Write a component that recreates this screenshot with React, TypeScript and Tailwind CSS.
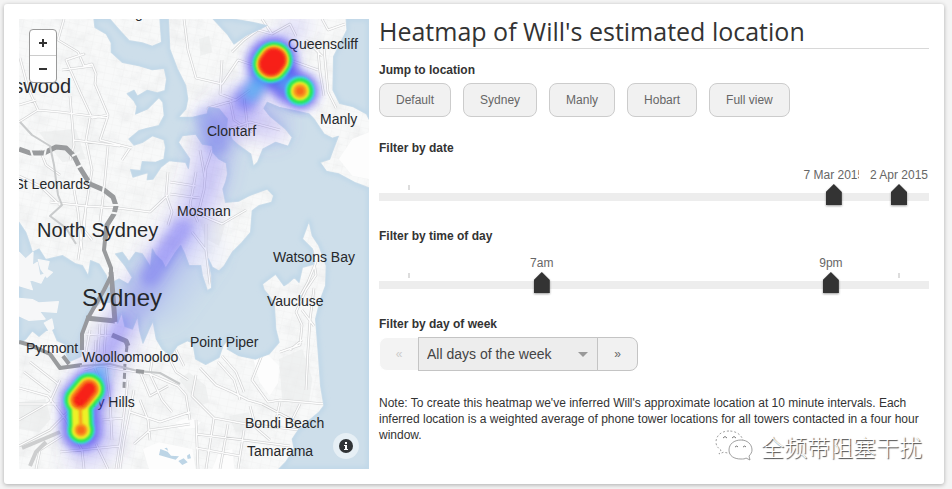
import { useId, useState } from "react";

const WATER = "#cddeea";
const DEEP = "#bfd7e8";

// Coastlines are plotted on a 1050 x 1350 sheet, the streets on the map's own grid.
const coast = [
  // Middle Harbour, Port Jackson and the Tasman Sea
  "M225 0 228 25 262 45 277 72 277 100 310 130 360 140 400 152 436 148 443 180 438 215 415 222 385 214 355 232 345 214 325 224 345 245 354 262 350 285 385 270 420 235 432 250 436 290 420 320 385 328 360 335 330 360 345 378 370 370 400 350 435 362 440 385 435 420 410 430 370 428 365 455 335 452 342 474 388 460 385 482 402 480 425 445 450 425 500 430 508 448 512 420 495 395 478 370 490 350 530 345 550 375 580 380 582 400 600 420 622 432 626 465 620 490 612 510 620 550 660 546 690 530 745 510 764 530 758 550 720 560 700 575 695 640 668 672 640 700 615 742 600 756 580 745 568 720 578 770 578 808 565 815 550 770 545 740 510 740 495 700 485 680 470 700 440 748 428 725 410 708 400 690 395 745 370 705 350 700 330 728 310 700 290 705 318 740 340 775 328 796 300 780 282 790 270 812 262 770 240 735 215 725 208 772 190 740 170 735 130 710 80 722 60 690 40 700 30 668 20 640 0 610 0 975 20 960 40 935 60 952 80 935 100 930 115 965 138 975 140 1000 150 1028 186 1012 190 955 205 900 225 870 245 850 275 850 285 880 296 912 308 880 318 922 340 930 356 892 362 935 372 972 390 930 402 905 412 960 430 990 455 1010 475 980 505 965 522 972 530 1020 560 1036 600 1015 612 980 632 955 625 990 660 1010 710 1020 750 1005 780 970 770 930 768 895 765 850 735 812 730 795 770 765 795 800 810 790 826 775 840 790 850 745 885 735 880 690 850 660 870 605 880 650 900 680 922 740 920 800 905 840 890 900 898 1000 905 1100 915 1160 900 1180 840 1230 820 1260 826 1290 800 1330 780 1350H1050V507L1010 492 960 465 922 457 903 430 932 420 945 385 958 352 940 358 915 345 885 300 870 285 830 276 780 265 745 250 735 268 752 290 800 330 820 355 808 382 770 370 732 390 716 430 703 442 695 405 660 380 640 362 622 330 625 300 600 270 570 265 565 285 520 295 478 295 500 270 506 240 500 200 475 150 452 90 448 0H423L428 70 400 82 370 72 330 65 300 32 272 0Z",
  "M982 0 984 33 944 113 942 213 962 253 1003 263 1043 285 1050 300V0Z",
  "M583 0 625 45 645 75 680 50 743 20 700 10 640 0Z",
];

const points = [
  "M0 700 20 720 42 700 40 740 55 730 62 770 80 765 66 792 30 780 40 812 0 800Z",
  "M0 838 40 842 60 852 118 848 112 880 60 876 78 900 30 904 0 890Z",
  "M58 722 90 728 84 752 100 760 84 775 66 750Z",
  "M76 912 98 900 104 928 90 936Z",
];

const ponds = [
  "M424 1290 446 1298 456 1310 480 1312 470 1322 448 1316 420 1308ZM478 1326 494 1318 506 1330 490 1338ZM504 1310 512 1304 516 1318 506 1320ZM436 1288 444 1286 448 1296Z",
];

const lawns = [
  "M700 1010 750 1010 780 1040 778 1090 752 1130 722 1090Z",
  "M600 1300 640 1290 646 1350H580Z",
  "M470 1210 510 1195 545 1210 530 1226 480 1230Z",
  "M372 1290 420 1270 520 1290 530 1350H390Z",
  "M1000 360 1050 340V480L1000 470 960 420Z",
];

const parks = [
  "M0 1150 80 1140 95 1200 60 1240 0 1230Z",
  "M540 60 570 50 580 100 545 110Z",
  "M480 1080 510 1060 560 1100 570 1150 540 1160Z",
  "M630 1190 690 1180 700 1230 650 1240Z",
  "M780 1020 850 990 880 1080 870 1150 790 1150Z",
  "M60 340 170 330 200 420 130 430Z",
  "M540 600 620 610 600 680 560 660Z",
];

const streets = [
  "M64 19 58 40 78 52 84 66 92 64 96 74 95 84 108 115 92 118 80 92 66 60 84 54 66 60",
  "M62 70 92 66M70 96 72 120 74 145 70 160",
  "M19 122 38 110 60 112 108 118M20 58 28 88 38 110",
  "M19 105 36 100M90 118 86 140 92 170 84 220 78 260M108 116 100 140 132 148M74 140 120 146",
  "M108 146 104 190 100 222M50 202 86 206 118 208 150 212 168 195",
  "M74 190 78 212 82 250M19 176 40 186 60 205M130 148 122 160",
  "M40 150 46 165 60 175M86 205 84 230 92 240",
  "M168 172 166 195 172 212 168 225M170 182 196 186M170 194 200 198M196 172 190 205 198 222",
  "M184 19 188 50 196 78 222 84 238 60 262 68M222 60 220 94 236 100 250 90",
  "M236 100 208 108 210 125M262 19 272 34 258 30 244 40 232 52M272 34 290 24 296 36",
  "M212 150 206 168 204 190 198 214 222 224 246 210M200 150 205 178M206 224 206 250 210 284M192 232 206 250",
  "M322 19 328 30 345 24M324 48 326 70 328 92 336 108M318 50 320 72 324 96",
  "M290 60 318 70M306 40 322 56M230 100 234 120 252 132M244 98 248 130M225 130 250 122 280 130",
  "M312 250 316 275 306 290 296 312 302 325 300 345 280 352M314 288 310 320 308 350 306 390",
  "M316 262 308 282 298 300M302 310 314 326M290 350 302 340",
  "M262 355 252 380 268 402 280 400 325 404M200 368 216 385 232 392 248 400 262 404",
  "M222 356 236 372 244 392M218 362 234 380 240 400M196 375 192 396 214 418 246 424 300 430",
  "M196 420 198 469M214 418 206 469M228 424 220 469M244 430 238 469M196 434 290 446M196 448 240 456",
  "M250 406 256 428 270 440M280 402 276 420M300 404 290 424M262 404 300 424",
  "M84 370 100 366 150 374 178 386 186 395 190 420M128 380 122 430 116 469M134 390 124 440 120 469",
  "M106 366 110 400 112 440M96 340 94 366 100 380M90 330 86 352M100 324 98 352M106 324 104 356M86 334 112 336",
  "M19 420 50 402 60 380M19 388 48 396 66 420 82 450 84 469M19 446 50 430 70 410",
  "M24 372 50 392M30 362 58 384M19 404 60 404M36 469 40 450 62 436M96 444 108 469M60 452 120 446M102 420 124 418",
  "M140 372 150 396 168 386M130 412 160 422 190 412M134 444 150 430 190 424M140 400 148 420 150 440",
  "M150 374 162 400 172 412M166 352 176 372 188 380M152 360 150 374M176 350 184 366",
];

type Label = { text: string; x: number; y: number; size?: number; end?: boolean };

const labels: Label[] = [
  { text: "g", x: 135, y: 18 },
  { text: "swood", x: 71, y: 93, size: 20, end: true },
  { text: "St Leonards", x: 90, y: 189, end: true },
  { text: "North Sydney", x: 37, y: 237, size: 20 },
  { text: "Sydney", x: 82, y: 306, size: 24 },
  { text: "Queenscliff", x: 288, y: 49 },
  { text: "Manly", x: 320, y: 124 },
  { text: "Clontarf", x: 207, y: 136 },
  { text: "Mosman", x: 177, y: 216 },
  { text: "Watsons Bay", x: 273, y: 262 },
  { text: "Vaucluse", x: 267, y: 306 },
  { text: "Point Piper", x: 190, y: 347 },
  { text: "Pyrmont", x: 26, y: 353 },
  { text: "Woolloomooloo", x: 82, y: 362 },
  { text: "Surry Hills", x: 71, y: 407 },
  { text: "Bondi Beach", x: 245, y: 428 },
  { text: "Tamarama", x: 247, y: 456 },
];

// Contour bands from the coolest to the hottest, each with its reach around every hotspot.
const bands = [
  { color: "#3fdcf5", opacity: 0.9, north: 20, east: 15, surry: 17, waist: 14, south: 14 },
  { color: "#22ee50", opacity: 1, north: 18.5, east: 13, surry: 15.5, waist: 12, south: 12.5 },
  { color: "#f4f81c", opacity: 1, north: 16, east: 9.5, surry: 12.5, waist: 9, south: 9.5 },
  { color: "#ffa012", opacity: 1, north: 14.5, east: 7, surry: 10.5, waist: 2, south: 6.5 },
  { color: "#ff6a10", opacity: 1, north: 13.5, east: 4, surry: 9, waist: 0, south: 4 },
  { color: "#ff1c08", opacity: 1, north: 12, east: 0, surry: 6.5, waist: 0, south: 0 },
];

function HeatMap() {
  return (
    <svg viewBox="19 19 350 450" className="col-start-1 row-start-1 block h-full w-full" role="img" aria-label="Heatmap over Sydney">
      <defs>
        <pattern id="blocks" width="9" height="7" patternUnits="userSpaceOnUse" patternTransform="rotate(12)">
          <path d="M0 0H9M0 0V7" stroke="#e6e7e8" strokeWidth="0.7" fill="none" />
        </pattern>
        <filter id="relief" x="0" y="0" width="100%" height="100%">
          <feTurbulence type="fractalNoise" baseFrequency="0.06" numOctaves="4" seed="7" />
          <feColorMatrix values="0 0 0 0 0.72  0 0 0 0 0.73  0 0 0 0 0.74  1.5 0 0 0 -0.66" />
        </filter>
        <filter id="shore"><feGaussianBlur stdDeviation="6" /></filter>
        <filter id="haze" x="-50%" y="-50%" width="200%" height="200%"><feGaussianBlur stdDeviation="10" /></filter>
        <filter id="glow" x="-50%" y="-50%" width="200%" height="200%"><feGaussianBlur stdDeviation="5" /></filter>
        <filter id="band" x="-50%" y="-50%" width="200%" height="200%"><feGaussianBlur stdDeviation="1.2" /></filter>
        <clipPath id="sea"><path d={coast.join("")} /></clipPath>
      </defs>

      <rect x="19" y="19" width="350" height="450" fill="#f8f9f9" />
      <rect x="19" y="19" width="350" height="450" fill="url(#blocks)" opacity="0.55" />
      <rect x="19" y="19" width="350" height="450" filter="url(#relief)" opacity="0.55" />
      <g transform="translate(19 19) scale(0.33333)">
        <path d={parks.join("")} fill="#e9ebeb" fillOpacity="0.6" />
        <path d={lawns.join("")} fill="#fdfdfd" />
      </g>
      <g fill="none" strokeLinejoin="round">
        <path d={streets.join("")} stroke="#d0d1d2" strokeWidth="2.6" />
        <path d={streets.join("")} stroke="#fdfdfd" strokeWidth="1.4" />
      </g>

      <g transform="translate(19 19) scale(0.33333)" strokeLinejoin="round">
        <path d={coast.join("")} fill={WATER} stroke={WATER} strokeWidth="4" />
        <g clipPath="url(#sea)">
          <path d={coast.join("")} fill="none" stroke={DEEP} strokeWidth="14" filter="url(#shore)" />
        </g>
        <path d={ponds.join("")} fill="#bdd5e6" />
        <path d={points.join("")} fill="#f6f7f8" stroke="#f6f7f8" strokeWidth="4" />
      </g>

      <g fill="none" stroke="#999b9d" strokeLinejoin="round">
        <path d="M19 149 30 153 44 153 56 147 66 148 74 156 80 168 90 184 104 190 113 197 116 206 114 214 107 225 105 240" strokeWidth="5" />
        <path d="M105 240 104 250 111 268 111 276 104 290 96 304 88 318 82 334 82 350" strokeWidth="4" />
        <path d="M111 272 113 296 115 322M86 318 115 321M112 335 126 341 128 346" strokeWidth="5" />
        <path d="M19 342 30 345 50 354 60 368 82 365M63 356 69 364" strokeWidth="4" />
        <path d="M127 346 125 362 124 388" strokeWidth="3" strokeDasharray="6 3" />
        <path d="M80 366 110 364 138 371 160 373 180 384" stroke="#c6c8c9" strokeWidth="2" />
        <path d="M136 371 144 372" strokeWidth="4" />
        <path d="M20 122 32 135 50 146 54 165 58 195 62 205 50 216 58 222 66 228 76 244" stroke="#c9cbcc" strokeWidth="2" />
        <path d="M22 448 60 432M30 466 36 452 46 442" stroke="#cdcecf" strokeWidth="4" />
      </g>
      <path
        d="M30 148 33 157M46 148 44 158M72 156 80 152M76 168 84 164M90 180 86 190M104 186 102 196M108 205 122 205M108 212 120 214"
        fill="none"
        stroke="#f5f6f6"
        strokeWidth="2"
      />

      <g fill="none" strokeLinecap="round" strokeLinejoin="round">
        <g filter="url(#haze)">
          <path d="M88 430 94 385 110 350 134 304 160 266 190 222 208 180 216 138 240 105" stroke="#6a5cf4" strokeOpacity="0.32" strokeWidth="34" />
          <path d="M222 118 262 116 270 126" stroke="#7466f5" strokeOpacity="0.26" strokeWidth="34" />
          <path d="M160 300 196 250" stroke="#8a92f5" strokeOpacity="0.14" strokeWidth="50" />
          <path d="M278 50 298 24" stroke="#7466f5" strokeOpacity="0.22" strokeWidth="20" />
          <path d="M84 455 104 440" stroke="#6a5cf4" strokeOpacity="0.2" strokeWidth="34" />
        </g>
        <g filter="url(#glow)">
          <path d="M150 276 164 254 182 228" stroke="#5b52f6" strokeOpacity="0.3" strokeWidth="20" />
          <path d="M102 366 110 346 124 322" stroke="#5b52f6" strokeOpacity="0.2" strokeWidth="16" />
          <path d="M205 118 218 144" stroke="#5560ee" strokeOpacity="0.24" strokeWidth="22" />
        </g>
      </g>

      <g fill="#26282b" fontFamily="'Liberation Sans', Arial, sans-serif">
        {labels.map((l) => (
          <text key={l.text} x={l.x} y={l.y} fontSize={l.size ?? 14} textAnchor={l.end ? "end" : "start"}>
            {l.text}
          </text>
        ))}
      </g>

      <g fill="none" strokeLinecap="round" strokeLinejoin="round" filter="url(#glow)">
        <path d="M90 389 80 400 81 431" stroke="#4a40f0" strokeOpacity="0.65" strokeWidth="40" />
        <path d="M268 72 246 98" stroke="#4a50f0" strokeOpacity="0.5" strokeWidth="24" />
        <path d="M271 63 273 61" stroke="#4a40f0" strokeOpacity="0.75" strokeWidth="49" />
        <path d="M288 84 300 91" stroke="#4a40f0" strokeOpacity="0.75" strokeWidth="37" />
        <path d="M262 78 251 94M280 78 290 84M92 388 101 372" stroke="#40c0f5" strokeOpacity="0.6" strokeWidth="12" />
      </g>

      <g opacity="0.95">
        {bands.map((b) => (
          <g key={b.color} filter="url(#band)" opacity={b.opacity} stroke={b.color} fill={b.color} strokeLinecap="round">
            <path d="M271 64 274 60" strokeWidth={b.north * 2 - 2} />
            <circle cx="300" cy="91" r={b.east} stroke="none" />
            <path d="M89 389 80 400" strokeWidth={b.surry * 2 - 1} />
            {b.waist > 0 && <path d="M80 402 81 430" strokeWidth={b.waist * 2 - 1} />}
            <circle cx="81" cy="430" r={b.south} stroke="none" />
          </g>
        ))}
      </g>
    </svg>
  );
}

function MapPanel() {
  return (
    <div className="grid h-[450px] w-[350px] shrink-0 overflow-hidden">
      <HeatMap />
      <div className="z-10 col-start-1 row-start-1 m-[10px] w-7 self-start overflow-hidden rounded border border-[#999] bg-white text-[#333]">
        <button type="button" aria-label="Zoom in" className="flex h-[26px] w-full items-center justify-center border-b border-[#ccc]">
          <svg viewBox="0 0 8 8" className="h-2 w-2" aria-hidden="true"><path d="M4 0V8M0 4H8" stroke="currentColor" strokeWidth="2" /></svg>
        </button>
        <button type="button" aria-label="Zoom out" className="flex h-[26px] w-full items-center justify-center">
          <svg viewBox="0 0 8 8" className="h-2 w-2" aria-hidden="true"><path d="M0 4H8" stroke="currentColor" strokeWidth="2" /></svg>
        </button>
      </div>
      <button type="button" aria-label="Map information" className="z-10 col-start-1 row-start-1 m-[10px] flex h-[26px] w-[26px] items-center justify-center self-end justify-self-end rounded-full bg-white/50">
        <svg viewBox="0 0 14 14" className="h-[14px] w-[14px]" aria-hidden="true">
          <circle cx="7" cy="7" r="7" fill="#303336" />
          <path d="M6 3H8V5H6ZM5 6H8V10H9V11H5V10H6V7H5Z" fill="#fff" />
        </svg>
      </button>
    </div>
  );
}

type RangeProps = { title: string; low: number; high: number; lowText: string; highText: string; ticks: number[] };

const thumbClass =
  "pointer-events-none col-start-1 row-start-1 mx-[22px] h-[21px] appearance-none self-start bg-transparent drop-shadow-[0_1px_1px_rgba(0,0,0,0.4)] [&::-webkit-slider-runnable-track]:h-[21px] [&::-webkit-slider-thumb]:pointer-events-auto [&::-webkit-slider-thumb]:h-[21px] [&::-webkit-slider-thumb]:w-4 [&::-webkit-slider-thumb]:appearance-none [&::-webkit-slider-thumb]:bg-[#333] [&::-webkit-slider-thumb]:[clip-path:polygon(50%_0,100%_38%,100%_100%,0_100%,0_38%)]";

function RangeFilter({ title, low, high, lowText, highText, ticks }: RangeProps) {
  const [from, setFrom] = useState(low);
  const [to, setTo] = useState(high);
  const id = useId();
  return (
    <section className="flex flex-col pb-6">
      <label htmlFor={id} className="text-xs leading-4 font-bold">{title}</label>
      <div className="relative mx-[30px] mt-[11px] h-[17px] text-xs leading-4 text-[#666]">
        <span className="absolute w-20 -translate-x-1/2 text-center" style={{ left: `${from}%` }}>{lowText}</span>
        <span className="absolute w-20 -translate-x-1/2 bg-white text-center" style={{ left: `${to}%` }}>{highText}</span>
        {ticks.map((t) => (
          <span key={t} className="absolute top-full mt-px h-[5px] w-0.5 -translate-x-1/2 bg-[#ddd]" style={{ left: `${t}%` }} />
        ))}
      </div>
      <div className="grid h-5">
        <div className="col-start-1 row-start-1 mt-[9px] h-2 bg-[#ededed]" />
        <input id={id} type="range" step="any" value={from} onChange={(e) => setFrom(Number(e.target.value))} className={thumbClass} />
        <input aria-label={`${title}, end`} type="range" step="any" value={to} onChange={(e) => setTo(Number(e.target.value))} className={thumbClass} />
      </div>
    </section>
  );
}

const places = ["Default", "Sydney", "Manly", "Hobart", "Full view"];

export default function App() {
  return (
    <main className="min-h-screen bg-[#f4f4f4] pt-1 pr-2 pb-1 pl-1 font-['Liberation_Sans',Arial,sans-serif] text-[#333]">
      <div className="relative flex gap-[10px] rounded-[3px] bg-white p-[15px] shadow-[0_1px_4px_rgba(0,0,0,0.3)]">
        <MapPanel />
        <div className="min-w-0 flex-1">
          <h1 className="border-b border-[#d8d8d8] pb-[5px] font-['Open_Sans','Noto_Sans',sans-serif] text-[25px] leading-6">
            Heatmap of Will's estimated location
          </h1>
          <h2 className="mt-[13px] text-xs leading-4 font-bold">Jump to location</h2>
          <div className="mt-[5px] mb-[23px] flex flex-wrap gap-3">
            {places.map((p) => (
              <button key={p} type="button" className="h-[34px] rounded-lg border border-[#ccc] bg-[#f1f1f1] px-4 text-xs text-[#666]">{p}</button>
            ))}
          </div>
          <RangeFilter title="Filter by date" low={86.7} high={100} lowText="7 Mar 2015" highText="2 Apr 2015" ticks={[0]} />
          <RangeFilter title="Filter by time of day" low={27.1} high={86.1} lowText="7am" highText="9pm" ticks={[0, 100]} />
          <label htmlFor="day" className="block text-xs leading-4 font-bold">Filter by day of week</label>
          <div className="mt-[5px] flex h-[34px]">
            <button type="button" disabled aria-label="Previous day" className="w-10 rounded-l-lg border border-white bg-[#f3f3f3] text-xs text-[#ccc]">«</button>
            <div className="-ml-px grid w-[180px] items-center">
              <select id="day" className="col-start-1 row-start-1 h-full appearance-none border border-[#c4c4c4] bg-[#ededed] px-2 text-sm text-[#444]">
                <option>All days of the week</option>
                <option>Weekdays</option>
                <option>Weekends</option>
              </select>
              <span className="pointer-events-none z-10 col-start-1 row-start-1 mr-[10px] justify-self-end border-x-[5px] border-t-[5px] border-x-transparent border-t-[#999]" />
            </div>
            <button type="button" aria-label="Next day" className="-ml-px w-[41px] rounded-r-lg border border-[#c4c4c4] bg-[#f1f1f1] text-xs text-[#666]">»</button>
          </div>
          <p className="mt-6 text-xs leading-4">
            Note: To create this heatmap we've inferred Will's approximate location at 10 minute intervals. Each
            inferred location is a weighted average of phone tower locations for all towers contacted in a four hour
            window.
          </p>
        </div>
        <div className="absolute right-[22px] bottom-[22px] flex items-center gap-2">
          <svg viewBox="0 0 38 32" className="h-8 w-[38px]" fill="#fff" stroke="#888" strokeWidth="0.8" aria-hidden="true">
            <path d="M14 1C6 1 1 6 1 12c0 4 2 6 5 8l-2 4 5-2c2 1 4 1 6 1 8 0 13-5 13-11S22 1 14 1Z" strokeDasharray="2 2" />
            <path d="M26 10c-7 0-12 4-12 10s5 9 12 9c2 0 4 0 5-1l4 2-1-4c2-2 3-4 3-6 0-6-5-10-11-10Z" />
            <path d="M8 8q2-3 4 0M17 8q2-3 4 0M20 17q2-2 3 0M28 17q2-2 3 0" fill="none" stroke="#555" />
          </svg>
          <span className="font-['Noto_Sans_CJK_SC',sans-serif] text-[23px] leading-8 font-light text-white [text-shadow:1px_1px_1px_#444]">全频带阻塞干扰</span>
        </div>
      </div>
    </main>
  );
}
